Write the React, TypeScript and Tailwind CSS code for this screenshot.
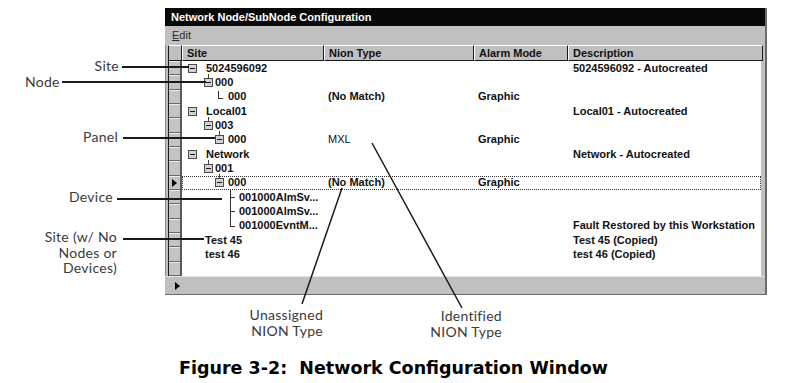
import React from "react";

type Row = {
  level: "site" | "node" | "leaf" | "panel" | "device" | "plain";
  text: string;
  nion?: string;
  nionThin?: boolean;
  alarm?: string;
  desc?: string;
  selected?: boolean;
  pos?: "first" | "mid" | "last";
};

const rows: Row[] = [
  { level: "site", text: "5024596092", desc: "5024596092 - Autocreated" },
  { level: "node", text: "000" },
  { level: "leaf", text: "000", nion: "(No Match)", alarm: "Graphic" },
  { level: "site", text: "Local01", desc: "Local01 - Autocreated" },
  { level: "node", text: "003" },
  { level: "panel", text: "000", nion: "MXL", nionThin: true, alarm: "Graphic" },
  { level: "site", text: "Network", desc: "Network - Autocreated" },
  { level: "node", text: "001" },
  { level: "panel", text: "000", nion: "(No Match)", alarm: "Graphic", selected: true },
  { level: "device", text: "001000AlmSv...", pos: "first" },
  { level: "device", text: "001000AlmSv...", pos: "mid" },
  { level: "device", text: "001000EvntM...", pos: "last", desc: "Fault Restored by this Workstation" },
  { level: "plain", text: "Test 45", desc: "Test 45 (Copied)" },
  { level: "plain", text: "test 46", desc: "test 46 (Copied)" },
];

function Box({ up }: { up?: boolean }) {
  return (
    <span className="relative inline-block w-[9px] h-[9px] border border-[#4a4a4a] bg-[#d2d2d2] shrink-0">
      <span className="absolute left-[1px] right-[1px] top-[3px] h-[1px] bg-[#1a1a1a]" />
      {up && <span className="absolute left-[3px] top-[-5px] w-[1px] h-[4px] bg-[#404040]" />}
    </span>
  );
}

function SiteCell({ r }: { r: Row }) {
  const base = "relative flex items-center h-full w-[142px] shrink-0";
  if (r.level === "site")
    return (
      <div className={base + " pl-[6px]"}>
        <Box />
        <span className="ml-[9px]">{r.text}</span>
      </div>
    );
  if (r.level === "node")
    return (
      <div className={base + " pl-[22px]"}>
        <Box up />
        <span className="ml-[2px]">{r.text}</span>
      </div>
    );
  if (r.level === "panel")
    return (
      <div className={base + " pl-[33px]"}>
        <Box up />
        <span className="ml-[4px]">{r.text}</span>
      </div>
    );
  if (r.level === "leaf")
    return (
      <div className={base + " pl-[46px]"}>
        <span className="absolute left-[36px] top-[1px] w-[1px] h-[7px] bg-[#333]" />
        <span className="absolute left-[36px] top-[8px] w-[5px] h-[1px] bg-[#333]" />
        <span>{r.text}</span>
      </div>
    );
  if (r.level === "device")
    return (
      <div className={base + " pl-[57px]"}>
        <span
          className={
            "absolute left-[48px] w-[1px] bg-[#333] " +
            (r.pos === "last" ? "top-0 h-[8px]" : "top-0 bottom-0")
          }
        />
        <span className="absolute left-[48px] top-[7px] w-[5px] h-[1px] bg-[#333]" />
        <span>{r.text}</span>
      </div>
    );
  return (
    <div className={base + " pl-[23px]"}>
      <span>{r.text}</span>
    </div>
  );
}

function HeaderCell({ w, label }: { w: string; label: string }) {
  return (
    <div
      className={
        w +
        " h-full shrink-0 flex items-center pl-[4px] bg-[#c0c0c0] border-t border-l border-t-white border-l-white border-r border-b border-r-[#1a1a1a] border-b-[#1a1a1a]"
      }
    >
      {label}
    </div>
  );
}

export default function App() {
  const blank = 15 - rows.length;
  return (
    <div className="relative w-[808px] h-[383px] bg-white overflow-hidden" style={{ fontFamily: '"Liberation Sans", Arial, sans-serif' }}>
      {/* Window */}
      <div className="ml-[165px] pt-[8px] w-[602px]">
        <div className="w-[602px] border-r-2 border-r-[#6a6a6a] bg-[#c0c0c0]">
          <div className="h-[18px] bg-[#080808] text-white font-bold text-[11px] flex items-center pl-[6px] leading-none">
            Network Node/SubNode Configuration
          </div>
          <div className="h-[19px] bg-[#c0c0c0] text-[11px] text-[#2a2a2a] flex items-center pl-[7px] leading-none">
            <span>
              <span className="underline">E</span>dit
            </span>
          </div>
          <div className="flex pl-[2px] pr-[3px] border-l border-l-[#909090]">
            <div className="flex flex-col">
              {/* header row */}
              <div className="flex h-[16px] text-[11px] font-bold text-[#111] leading-none">
                <div className="w-[14px] h-full bg-[#c0c0c0] border-t border-l border-t-white border-l-[#1a1a1a] border-r border-b border-r-[#1a1a1a] border-b-[#1a1a1a]" />
                <HeaderCell w="w-[142px]" label="Site" />
                <HeaderCell w="w-[150px]" label="Nion Type" />
                <HeaderCell w="w-[94px]" label="Alarm Mode" />
                <HeaderCell w="w-[195px]" label="Description" />
              </div>
              {/* body */}
              <div className="flex h-[215px]">
                <div className="w-[14px] flex flex-col border-l border-l-[#1a1a1a] border-r-2 border-r-[#5a5a5a]">
                  {Array.from({ length: 15 }).map((_, i) => (
                    <div
                      key={i}
                      className="h-[14.33px] bg-[#c4c4c4] border-t border-t-[#ececec] border-b border-b-[#6a6a6a] flex items-center justify-center"
                    >
                      {rows[i]?.selected && (
                        <svg width="5" height="8" viewBox="0 0 5 8">
                          <path d="M0 0 L5 4 L0 8 Z" fill="#000" />
                        </svg>
                      )}
                    </div>
                  ))}
                </div>
                <div className="bg-white w-[579px] flex flex-col text-[11px] font-bold text-[#111] leading-none">
                  {rows.map((r, i) => (
                    <div
                      key={i}
                      className={
                        "flex h-[14.33px] items-center" +
                        (r.selected ? " outline-1 outline-dotted outline-[#333] -outline-offset-1" : "")
                      }
                    >
                      <SiteCell r={r} />
                      <div className={"w-[150px] shrink-0 pl-[4px]" + (r.nionThin ? " font-normal" : "")}>{r.nion ?? ""}</div>
                      <div className="w-[94px] shrink-0 pl-[4px]">{r.alarm ?? ""}</div>
                      <div className="w-[193px] shrink-0 pl-[5px] whitespace-nowrap">{r.desc ?? ""}</div>
                    </div>
                  ))}
                  {Array.from({ length: blank }).map((_, i) => (
                    <div key={"b" + i} className="h-[14.33px]" />
                  ))}
                </div>
              </div>
            </div>
          </div>
          <div className="h-[19px] bg-[#c0c0c0] border-t border-t-[#e4e4e4] border-b border-b-[#6a6a6a] flex items-center pl-[10px]">
            <svg width="5" height="8" viewBox="0 0 5 8">
              <path d="M0 0 L5 4 L0 8 Z" fill="#000" />
            </svg>
          </div>
        </div>
      </div>

      {/* Caption */}
      <div
        className="ml-[179px] mt-[63px] text-[17.5px] font-bold text-black leading-[20px] whitespace-pre"
        style={{ fontFamily: '"DejaVu Sans", Verdana, sans-serif' }}
      >
        Figure 3-2:  Network Configuration Window
      </div>

      {/* Callout labels */}
      <div className="absolute inset-0 pointer-events-none text-[14px] text-[#3a3a3a] leading-[16px] tracking-[0.02em]" style={{ fontFamily: 'Lato, "Noto Sans", sans-serif' }}>
        <div className="absolute right-[689px] top-[58px]">Site</div>
        <div className="absolute left-[25px] top-[74px]">Node</div>
        <div className="absolute right-[690px] top-[129px]">Panel</div>
        <div className="absolute right-[695px] top-[189px]">Device</div>
        <div className="absolute right-[691px] top-[229px] text-right leading-[15.5px]">
          <div>Site (w/ No</div>
          <div>Nodes or</div>
          <div>Devices)</div>
        </div>
        <div className="absolute right-[485px] top-[307px] text-right">
          <div>Unassigned</div>
          <div>NION Type</div>
        </div>
        <div className="absolute right-[306px] top-[308px] text-right">
          <div>Identified</div>
          <div>NION Type</div>
        </div>
        <svg className="absolute inset-0" width="808" height="383" viewBox="0 0 808 383">
          <g stroke="#1a1a1a" strokeWidth="2">
            <line x1="122" y1="67" x2="189" y2="67" />
            <line x1="62" y1="82" x2="206" y2="82" />
            <line x1="123" y1="138" x2="215" y2="138" />
            <line x1="117" y1="199" x2="222" y2="199" />
            <line x1="123" y1="239" x2="204" y2="239" />
          </g>
          <g stroke="#1a1a1a" strokeWidth="1.5">
            <line x1="342" y1="188" x2="302" y2="304" />
            <line x1="372" y1="143" x2="462" y2="308" />
          </g>
        </svg>
      </div>
    </div>
  );
}
